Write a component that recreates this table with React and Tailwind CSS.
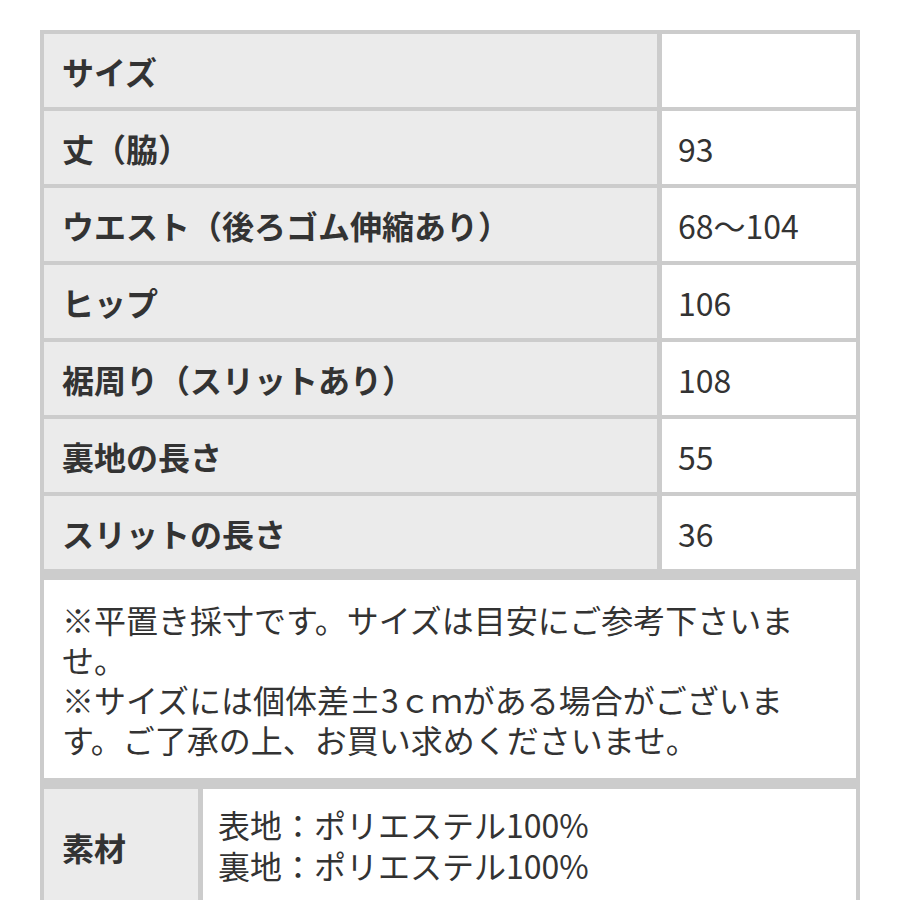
import React from "react";

const rows = [
  ["サイズ", ""],
  ["丈（脇）", "93"],
  ["ウエスト（後ろゴム伸縮あり）", "68〜104"],
  ["ヒップ", "106"],
  ["裾周り（スリットあり）", "108"],
  ["裏地の長さ", "55"],
  ["スリットの長さ", "36"],
];

const font = { fontFamily: '"Noto Sans CJK JP", "Noto Sans", sans-serif' };

export default function App() {
  return (
    <div className="w-[900px] h-[900px] overflow-hidden bg-white pt-[30px] pl-[40px] text-[#333]" style={font}>
      <div className="w-[820px] bg-[#cccccc] p-[4px] flex flex-col gap-[11px]">
        <div className="grid grid-cols-[613px_1fr] gap-x-[5px] gap-y-[4px]">
          {rows.map(([label, value]) => (
            <React.Fragment key={label}>
              <div className="h-[73px] bg-[#ebebeb] flex items-center pl-[18px] text-[32px] font-bold leading-none">
                {label}
              </div>
              <div className="h-[73px] bg-white flex items-center pl-[16px] text-[32px] leading-none">
                {value}
              </div>
            </React.Fragment>
          ))}
        </div>
        <div className="bg-white px-[18px] py-[19px] text-[32px] leading-[40px]">
          <p>※平置き採寸です。サイズは目安にご参考下さいませ。</p>
          <p>※サイズには個体差±3ｃｍがある場合がございます。ご了承の上、お買い求めくださいませ。</p>
        </div>
        <div className="grid grid-cols-[154px_1fr] gap-x-[5px]">
          <div className="min-h-[116px] bg-[#ebebeb] flex items-center pl-[18px] text-[32px] font-bold leading-none">
            素材
          </div>
          <div className="min-h-[116px] bg-white flex flex-col justify-start pt-[15px] pl-[15px] text-[32px] leading-[41px]">
            <p>表地：ポリエステル100%</p>
            <p>裏地：ポリエステル100%</p>
          </div>
        </div>
      </div>
    </div>
  );
}
